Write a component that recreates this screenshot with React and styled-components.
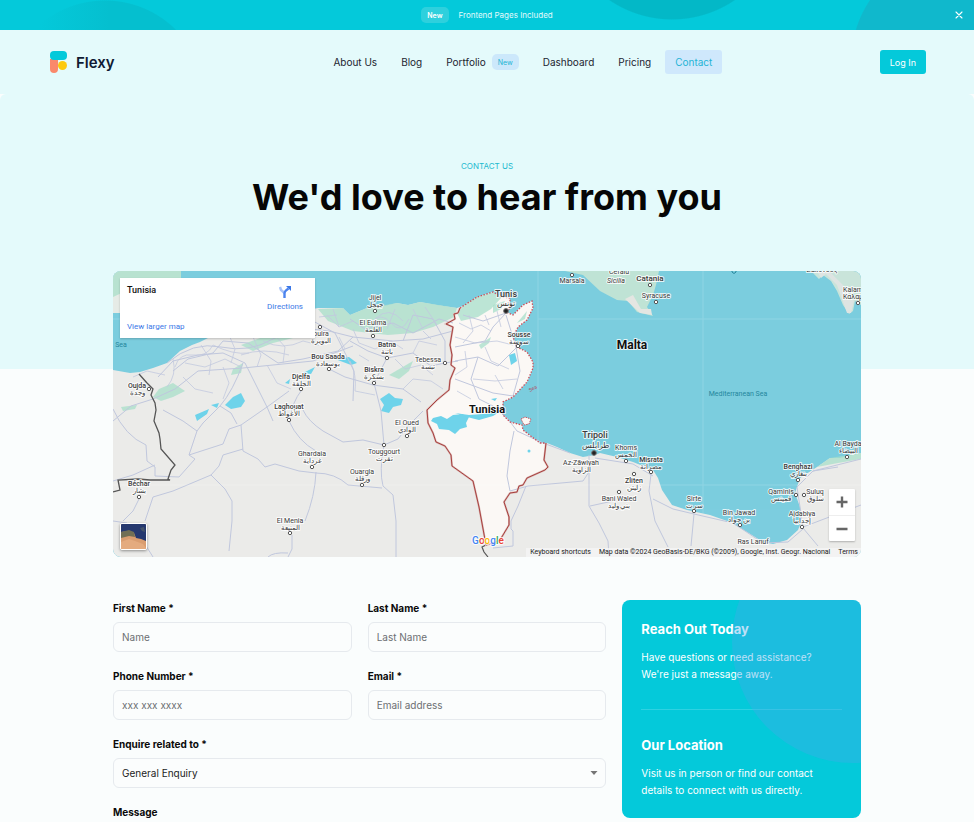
import React from "react";
import styled, { createGlobalStyle, css } from "styled-components";

const GlobalStyle = createGlobalStyle`
  *, *::before, *::after { box-sizing: border-box; }
  body {
    margin: 0;
    background: #fafdfd;
    color: #0a0a0a;
    font-family: Inter, "Liberation Sans", sans-serif;
    font-size: 10px;
  }
  h1, h2, p { margin: 0; }
  button, input, select, textarea { font-family: inherit; }
`;

/* ---------- announcement ---------- */

const Banner = styled.aside`
  display: grid;
  grid-template-columns: 24px 1fr 24px;
  align-items: center;
  height: 30px;
  padding: 0 3px;
  color: #e2fafc;
  background:
    radial-gradient(circle 112px at 69% -92px, #03b8c7 99%, transparent 100%),
    radial-gradient(circle 107px at calc(100% - 16px) 60px, #10b8cc 99%, transparent 100%),
    linear-gradient(90deg, #04c9da 40px, transparent 110px),
    radial-gradient(circle 101px at 105px 101px, #05bfcf 99%, transparent 100%),
    #04c9da;
`;

const BannerText = styled.p`
  grid-column: 2;
  display: flex;
  align-items: center;
  justify-content: center;
  gap: 10px;
  font-size: 8px;
`;

const Badge = styled.span`
  display: inline-flex;
  align-items: center;
  height: 16px;
  padding: 0 6px;
  border-radius: 5px;
  font-size: 7px;
  ${(p) =>
    p.$solid
      ? css`background: #2ed0dd; color: #fff; font-weight: 600;`
      : css`background: #cce8fb; color: #23b5d3;`}
`;

const CloseButton = styled.button`
  display: grid;
  place-items: center;
  width: 24px;
  height: 24px;
  padding: 0;
  border: 0;
  background: none;
  color: #fff;
`;

/* ---------- header ---------- */

const Header = styled.header`
  display: flex;
  align-items: center;
  justify-content: space-between;
  height: 64px;
  padding: 0 48px 0 50px;
  background: #e4fafb;
`;

const Brand = styled.a`
  display: flex;
  align-items: center;
  gap: 9px;
  min-width: 116px;
  color: #0f1a33;
  font-size: 15px;
  font-weight: 600;
  text-decoration: none;
`;

const Nav = styled.nav`
  display: flex;
  gap: 4px;
`;

const NavLink = styled.a`
  display: flex;
  align-items: center;
  gap: 6px;
  height: 24px;
  padding: 0 10px;
  border-radius: 3px;
  font-size: 10px;
  text-decoration: none;
  color: ${(p) => (p.$active ? "#1fb4d6" : "#1c2430")};
  background: ${(p) => (p.$active ? "#cfe8fc" : "transparent")};
`;

const LoginButton = styled.button`
  height: 24px;
  padding: 0 10px;
  border: 0;
  border-radius: 3px;
  background: #04c9da;
  color: #fff;
  font-size: 9px;
`;

/* ---------- hero ---------- */

const Hero = styled.section`
  height: 275px;
  padding-top: 66px;
  border-radius: 6px 6px 0 0;
  background: #e4fafb;
  text-align: center;
`;

const Eyebrow = styled.p`
  color: #22b9cf;
  font-size: 8px;
  line-height: 12px;
`;

const Title = styled.h1`
  font-size: 36px;
  font-weight: 700;
  line-height: 50px;
  color: #060606;
`;

const Container = styled.main`
  max-width: 1400px;
  margin: -98px auto 0;
  padding: 0 113px 40px;
  @media (max-width: 800px) {
    padding: 0 24px 40px;
  }
`;

/* ---------- map ---------- */

const MapFrame = styled.section`
  position: relative;
  height: 286px;
  border-radius: 8px;
  overflow: hidden;
  background: #7ccddf;
  font-family: Roboto, "Noto Sans", sans-serif;
`;

const MapSvg = styled.svg`
  display: block;
  width: 100%;
  height: 100%;
`;

const PlaceCard = styled.div`
  position: absolute;
  top: 7px;
  left: 7px;
  display: grid;
  grid-template-columns: 1fr auto;
  align-content: space-between;
  width: 195px;
  height: 60px;
  padding: 6px 12px 6px 7px;
  background: #fff;
  box-shadow: 0 1px 2px rgba(0, 0, 0, 0.2);
`;

const PlaceName = styled.h2`
  font-size: 9px;
  font-weight: 500;
  line-height: 12px;
  color: #111;
`;

const MapLink = styled.a`
  display: grid;
  justify-items: center;
  gap: 3px;
  width: max-content;
  color: #3b78e7;
  font-size: 8px;
  line-height: 10px;
  text-decoration: none;
  & > svg { margin-top: 1px; }
`;

const ZoomControls = styled.div`
  position: absolute;
  right: 6px;
  bottom: 16px;
  display: grid;
  width: 26px;
  background: #fff;
  border-radius: 1px;
  box-shadow: 0 1px 2px rgba(0, 0, 0, 0.25);
`;

const ZoomButton = styled.button`
  display: grid;
  place-items: center;
  height: 26px;
  padding: 0;
  border: 0;
  background: none;
  color: #666;
  & + & { border-top: 1px solid #eee; }
`;

const SatelliteButton = styled.button`
  position: absolute;
  left: 7px;
  bottom: 7px;
  width: 27px;
  height: 27px;
  padding: 0;
  border: 1px solid #fff;
  border-radius: 2px;
  overflow: hidden;
  box-shadow: 0 1px 3px rgba(0, 0, 0, 0.4);
`;

const Attribution = styled.p`
  position: absolute;
  right: 0;
  bottom: 0;
  display: flex;
  gap: 8px;
  padding: 0 3px 0 4px;
  background: rgba(245, 245, 245, 0.75);
  color: #222;
  font-size: 7px;
  line-height: 9px;
  white-space: nowrap;
`;

const PLACES = [
  { x: 262, y: 29, name: "Jijel", ar: "جيجل", dot: [262, 40] },
  { x: 260, y: 54, name: "El Eulma", ar: "العلمة", dot: [260, 65] },
  { x: 208, y: 65, name: "ouira", ar: "البويرة", dot: [207, 56] },
  { x: 215, y: 88, name: "Bou Saada", ar: "بوسعادة", dot: [216, 98], w: 500 },
  { x: 188, y: 108, name: "Djelfa", ar: "الجلفة", dot: [188, 118], w: 500 },
  { x: 274, y: 76, name: "Batna", ar: "باتنة", dot: [274, 87], w: 500 },
  { x: 261, y: 101, name: "Biskra", ar: "بسكرة", dot: [261, 112], w: 500 },
  { x: 315, y: 91, name: "Tebessa", ar: "تبسة", dot: [332, 92] },
  { x: 24, y: 117, name: "Oujda", ar: "وجدة", dot: [36, 118], w: 500 },
  { x: 176, y: 138, name: "Laghouat", ar: "الأغواط", dot: [176, 149], w: 500 },
  { x: 294, y: 154, name: "El Oued", ar: "الوادي", dot: [294, 165] },
  { x: 271, y: 183, name: "Touggourt", ar: "تقرت", dot: [271, 174] },
  { x: 199, y: 185, name: "Ghardaia", ar: "غرداية", dot: [199, 196] },
  { x: 249, y: 203, name: "Ouargla", ar: "ورقلة", dot: [249, 214] },
  { x: 26, y: 215, name: "Béchar", ar: "بشار", dot: [26, 226], w: 500 },
  { x: 177, y: 252, name: "El Menia", ar: "المنيعة", dot: [177, 262] },
  { x: 406, y: 66, name: "Sousse", ar: "سوسة", dot: [405, 75], w: 500 },
  { x: 459, y: 12, name: "Marsala", dot: [459, 4] },
  { x: 506, y: 3, name: "Cefalù" },
  { x: 503, y: 12, name: "Sicilia", italic: true },
  { x: 537, y: 10, name: "Catania", dot: [537, 14], size: 8, w: 500 },
  { x: 543, y: 27, name: "Syracuse", dot: [543, 31] },
  { x: 709, y: 1, name: "Ζάκυνθος" },
  { x: 740, y: 21, name: "Kalam" },
  { x: 740, y: 28, name: "Καλαμ", dot: [745, 32] },
  { x: 468, y: 194, name: "Az-Zāwiyah", ar: "الزاوية" },
  { x: 513, y: 179, name: "Khoms", ar: "الخمس", dot: [513, 190] },
  { x: 538, y: 191, name: "Misrata", ar: "مصراتة", dot: [538, 201], w: 500 },
  { x: 521, y: 212, name: "Zliten", ar: "زليتن", dot: [521, 203], w: 500 },
  { x: 506, y: 230, name: "Bani Waled", ar: "بني وليد", dot: [506, 221] },
  { x: 581, y: 230, name: "Sirte", ar: "سرت", dot: [581, 240] },
  { x: 626, y: 244, name: "Bin Jawad", ar: "بن جواد", dot: [627, 254] },
  { x: 640, y: 273, name: "Ras Lanuf" },
  { x: 685, y: 198, name: "Benghazi", ar: "بنغازي", dot: [685, 209], w: 500 },
  { x: 668, y: 223, name: "Qaminis", ar: "قمينس", dot: [683, 224] },
  { x: 702, y: 223, name: "Suluq", ar: "سلوق", dot: [691, 224] },
  { x: 689, y: 245, name: "Ajdabiya", ar: "إجدابيا", dot: [689, 256] },
  { x: 735, y: 175, name: "Al Bayda", ar: "البيضاء", dot: [734, 186] },
];

const ROADS = [
  "M0 150L18 135L40 128L62 118L85 100L130 97L200 90L240 75",
  "M45 106L60 90L85 84L110 82L132 92L140 108L154 136L160 150",
  "M54 92Q80 70 108 76T160 68T216 60",
  "M60 100L75 88L100 82L110 70L135 72L165 92L190 88L225 80L240 66",
  "M0 138Q12 165 33 174L34 190L42 196V205",
  "M0 210L20 204L42 194M42 205L66 206L82 188L76 184L110 173L116 158L128 154L154 136L176 120",
  "M130 92Q120 120 107 135L118 142L124 153M107 135L90 152L84 160L76 184M50 139L70 150L84 160",
  "M128 154L130 180L145 188L152 196L162 193L186 200L203 202Q222 202 235 214",
  "M130 178L110 184L106 195L98 204L60 220L40 226L32 250M98 204L112 218L119 230V250L116 280",
  "M26 228L20 240L10 250M0 250L14 252L30 270L40 286",
  "M176 150Q185 170 203 180M203 201Q202 225 192 250M179 264V278L175 286M155 286Q160 281 175 282",
  "M190 139Q195 150 210 160L230 171L250 169L271 174L285 168L296 154L310 140",
  "M271 174Q266 200 270 215L280 224L283 250V286M235 214L269 217",
  "M188 120Q180 130 176 149M216 98L232 106L260 114L290 118L308 131",
  "M216 60L240 66L280 70L310 68L340 60M237 48L252 58L280 52L300 62L326 48L340 52",
  "M237 70L255 80L274 87L300 82L318 95L332 92L345 90M274 87L261 112L268 140L271 174",
  "M200 50L222 62L232 82L241 100L240 130M290 70L300 44L320 48L332 70L332 92",
  "M350 44L370 50L393 42M393 42L380 56L372 70L342 76M393 44L398 60L403 76L407 100L400 125L380 122L342 108",
  "M342 90L365 86L385 95L404 76M365 86L358 108L366 128L380 135",
  "M380 135L395 148L404 160L430 172L457 182M401 160L397 180L394 205L397 220L415 215L470 210L478 198",
  "M413 215L405 235L398 250V258L400 260V275L380 277",
  "M482 187L520 193L540 205M476 184V235L486 252L495 270L496 286",
  "M477 235L500 230M538 203L536 220L542 250L555 276M540 228L560 238L581 243L578 275",
  "M581 243L620 252L650 272L675 271L690 258L687 236L684 216L700 200L748 188",
  "M690 257L705 275M690 256L748 234M700 200L725 196",
];

const MINOR_ROADS = [
  "M258 52q10-12 20 0t18-4M262 48q14-14 28 2M300 38l10 20M312 36l12 18M282 38l-8 20M214 44l12 12l14-6M206 46l18-2M220 38l6 18",
  "M62 96Q66 82 80 84T100 74Q120 84 136 82M72 92L92 96L112 88L128 96M88 74L98 90L96 104M116 64L122 78L118 92M140 66L148 84L144 96M160 62L172 76L170 92M60 88Q64 104 54 116M20 106L34 100L52 104",
  "M150 70Q170 80 190 70L206 74M128 84Q150 76 176 84M154 94L164 112L178 118M110 96L116 112L110 128M70 106L82 118L100 122",
  "M240 58L246 72L262 78L278 70L290 78M246 84L256 90M282 88L292 98L308 94L320 104M300 82L306 70L324 74M310 60L318 68",
  "M237 90Q244 104 242 120L262 124M290 118L300 108L318 110L330 118M226 66L232 78",
  "M346 52L358 58L368 54L378 60M356 44L360 60L350 72M372 44L376 54M384 40L388 56M342 66L362 72L384 70L400 74M352 80L354 96L342 104M372 76L378 90L396 98",
  "M382 104L390 118M360 108L382 110L404 108M344 120L358 128",
];

const GREENS = [
  "M0 0H68V8L50 14L30 12L0 26Z",
  "M205 38L230 37L237 44L254 37L284 32L295 34L307 31L344 37L341 46L320 56L300 62L275 64L240 60L215 50Z",
  "M128 74L150 66L178 62L196 58L184 66L160 72L140 80Z",
  "M350 35L364 26L380 21L389 26L378 38L365 46L348 50L344 42Z",
  "M120 98L130 92L128 102L118 104Z",
  "M46 118L60 112L72 120L60 126L48 130L40 126Z",
  "M366 74L378 66L376 72L368 78Z",
  "M276 104L300 90L296 100L286 108Z",
  "M380 34L392 30L388 38L380 42Z",
  "M404 52L414 40L412 48Z",
  "M8 136L24 134L22 138L10 140Z",
  "M704 196L717 187L748 182V188L725 192Z",
];

const LAKES = [
  "M112 134L120 126L128 122L132 130L128 136L118 138Z",
  "M82 144L96 138L94 143L84 150Z M98 134L106 132L104 137Z",
  "M172 112L177 108L176 113Z M190 102L202 96L198 103Z",
  "M222 88L236 86L244 92L238 94Z",
  "M267 128L276 122L282 127L290 128L288 134L280 136L276 142L268 140L271 134Z",
  "M396 84L402 82L404 90L398 94Z M378 128L384 127L382 130Z",
  "M320 147L328 145L334 148L340 144L350 143L356 146L353 152L354 156L347 158L342 163L336 159L326 158L324 153L318 150Z M342 142L356 144L370 143L388 140L380 145L366 149L358 147Z",
];

const AFRICA =
  "M0 99L17 102L27 101L40 97L54 92L67 80L79 74L87 71L95 67L110 62L150 48L190 40L205 37L230 37L237 44L254 37L267 36L284 32L295 34L307 31L324 34L344 37L350 35L364 26L380 21L389 26L397 27L397 37L393 41L400 44L410 34L419 30L420 37L414 49L405 56L400 66L404 76L414 81L420 91L420 97L414 111L400 126L390 131L390 144L397 151L409 154L410 159L419 166L427 172L434 172L444 176L457 182L470 186L482 184L487 182L504 186L520 191L540 199L545 207L549 219L559 234L574 239L597 244L617 251L634 261L650 271L660 273L674 269L685 259L689 249L687 236L682 222L687 207L704 196L717 187L727 187L748 182V286H0Z";
const TUNISIA_COAST =
  "M347 37L364 26L380 21L389 26L397 27L397 37L393 41L400 44L410 34L419 30L420 37L414 49L405 56L400 66L404 76L414 81L420 91L420 97L414 111L400 126L390 131V144L397 151L409 154L410 159L419 166L427 172H433";
const TUNISIA_BORDER =
  "L431 189L435 196L432 199L414 207L410 214L406 215L404 221L397 222L391 231L396 246V254L387 269L380 272L373 274L366 236L360 210L339 195L338 184L332 175L323 171L320 162L315 152L314 139L324 129L336 119L337 109L342 97L338 94L339 84L337 74L340 56L333 53L342 48L341 43L345 42L347 37";

const Label = styled.text`
  font-size: ${(p) => p.$size || 7}px;
  font-weight: ${(p) => p.$weight || 400};
  font-style: ${(p) => (p.$italic ? "italic" : "normal")};
  fill: ${(p) => p.$color || "#3a3a3a"};
  stroke: ${(p) => (p.$plain ? "none" : "rgba(255,255,255,0.8)")};
  stroke-width: 2px;
  stroke-linejoin: round;
  paint-order: stroke;
  text-anchor: middle;
`;

function Place({ x, y, name, ar, dot, size, w, italic }) {
  return (
    <g>
      <Label x={x} y={y} $size={size} $weight={w} $italic={italic}>{name}</Label>
      {ar && <Label x={x} y={y + 7}>{ar}</Label>}
      {dot && <circle cx={dot[0]} cy={dot[1]} r="1.7" fill="#fff" stroke="#555" />}
    </g>
  );
}

function MapDrawing() {
  return (
    <MapSvg viewBox="0 0 748 286" preserveAspectRatio="xMidYMid slice" role="img" aria-label="Map of Tunisia">
      <rect width="748" height="286" fill="#7ccddf" />
      <path d={AFRICA} fill="#ebebe9" />
      <path d="M0 0H68V8L50 14L36 34L20 42L0 42Z" fill="#e6ebe6" />
      <path d="M452 0L470 4L487 20L504 29L515 30L524 41L540 45L534 36L540 24L543 14L546 0Z" fill="#bfe3d5" />
      <path d="M512 28L520 24L528 38L538 38L539 44L527 42Z" fill="#e4e6e2" />
      <path d="M694 0L700 2L706 8L710 4L718 10L724 20L730 34L736 43L740 40L742 30L748 34V0Z" fill="#c9e4da" />
      <path d="M704 0L708 7L713 3L724 14L734 42L738 42L741 30L730 14L716 0Z" fill="#dfe4e2" />
      <path d={TUNISIA_COAST + TUNISIA_BORDER + "Z"} fill="#fbf8f5" />
      <path d="M408 148L412 146L418 148L416 153L411 154Z" fill="#fbf8f5" stroke="#c8505c" strokeDasharray="1.5 1" />
      {GREENS.map((d) => <path key={d} d={d} fill="#a8dfc9" opacity=".75" />)}
      {LAKES.map((d) => <path key={d} d={d} fill="#6fd3ea" />)}
      <circle cx="416" cy="180" r="1.5" fill="#6fd3ea" />
      {ROADS.map((d) => <path key={d} d={d} fill="none" stroke="#c0c7dd" strokeWidth="1" strokeLinejoin="round" />)}
      {MINOR_ROADS.map((d) => <path key={d} d={d} fill="none" stroke="#c3c9de" strokeWidth=".8" strokeLinejoin="round" />)}
      <path d="M425 0V172M590 0V242M0 48H50M425 48H748M0 214H748" stroke="#fff" opacity=".15" />
      <path d="M26 103L34 112L40 118L38 124L42 132L43 139L41 150L46 162L47 168L48 178L62 194L58 199L55 208L57 209L37 209L25 208L5 209L7 219L0 221" fill="none" stroke="#555" strokeWidth="1.3" />
      <path d="M373 274L369 276L371 281L375 286" fill="none" stroke="#555" strokeWidth="1.2" />
      <path d={"M433 172" + TUNISIA_BORDER} fill="none" stroke="#d9b8b4" strokeWidth="2" />
      <path d={"M433 172" + TUNISIA_BORDER} fill="none" stroke="#a8403f" strokeWidth="1" />
      <path d={TUNISIA_COAST} fill="none" stroke="#c8505c" strokeWidth="1.3" strokeDasharray="1.5 1.5" />
      {PLACES.map((p) => <Place key={p.name} {...p} />)}
      <Label x={393} y={26} $size={9} $weight={500}>Tunis</Label>
      <Label x={393} y={35} $size={8}>تونس</Label>
      <circle cx="393" cy="40" r="2.4" fill="#222" stroke="#777" />
      <Label x={482} y={167} $size={9} $weight={500}>Tripoli</Label>
      <Label x={482} y={177} $size={8}>طرابلس</Label>
      <circle cx="481" cy="182" r="2.4" fill="#222" stroke="#777" />
      <Label x={374} y={142} $size={11} $weight={700} $color="#111">Tunisia</Label>
      <Label x={519} y={78} $size={12} $weight={700} $color="#111">Malta</Label>
      <Label x={625} y={125} $color="#25879d" $plain>Mediterranean Sea</Label>
      <Label x={8} y={76} $color="#25879d" $plain>Sea</Label>
      <text x="417" y="121" transform="rotate(-28 417 121)" fontSize="5" fill="#b34b5d">Sea</text>
      <path d="M619 0v1q2 3 4 0v-1" fill="none" stroke="#25879d" />
      <Label x={375} y={273} $size={10} $weight={500}>
        <tspan fill="#4285f4">G</tspan><tspan fill="#ea4335">o</tspan><tspan fill="#fbbc05">o</tspan><tspan fill="#4285f4">g</tspan><tspan fill="#34a853">l</tspan><tspan fill="#ea4335">e</tspan>
      </Label>
    </MapSvg>
  );
}

function ContactMap() {
  return (
    <MapFrame aria-label="Our location on the map">
      <MapDrawing />
      <PlaceCard>
        <PlaceName>Tunisia</PlaceName>
        <MapLink href="#directions">
          <svg width="14" height="14" viewBox="0 0 14 14" fill="none">
            <path d="M2 2L3 5L6.5 8" stroke="#a8c3f8" strokeWidth="2.4" />
            <path d="M6.5 13V8.5Q6.5 6 10.5 3.5" stroke="#4c84ee" strokeWidth="2.4" />
            <path d="M8 1H13V6Z" fill="#3b78e7" />
          </svg>
          Directions
        </MapLink>
        <MapLink href="#larger-map">View larger map</MapLink>
      </PlaceCard>
      <SatelliteButton aria-label="Show satellite imagery">
        <svg width="25" height="25" viewBox="0 0 25 25">
          <rect width="25" height="25" fill="#d99d70" />
          <path d="M0 0H25V17L20 15L15 14L13 9L8 7L0 8Z" fill="#25386f" />
          <path d="M0 8L8 6L13 8L14 13L8 12L0 14Z" fill="#716f55" />
          <path d="M19 4L23 3L24 8L21 7Z" fill="#45546b" />
          <path d="M0 18L8 15L14 17L22 20L25 24V25H0Z" fill="#e4ab7f" />
        </svg>
      </SatelliteButton>
      <ZoomControls>
        <ZoomButton aria-label="Zoom in">
          <svg width="12" height="12" viewBox="0 0 12 12"><path d="M0.5 6H11.5M6 0.5V11.5" stroke="currentColor" strokeWidth="2.4" /></svg>
        </ZoomButton>
        <ZoomButton aria-label="Zoom out">
          <svg width="12" height="12" viewBox="0 0 12 12"><path d="M0.5 6H11.5" stroke="currentColor" strokeWidth="2.4" /></svg>
        </ZoomButton>
      </ZoomControls>
      <Attribution>
        <span>Keyboard shortcuts</span>
        <span>Map data ©2024 GeoBasis-DE/BKG (©2009), Google, Inst. Geogr. Nacional</span>
        <span>Terms</span>
      </Attribution>
    </MapFrame>
  );
}

/* ---------- form ---------- */

const ContactGrid = styled.div`
  display: grid;
  grid-template-columns: repeat(3, minmax(0, 1fr));
  gap: 16px;
  align-items: start;
  margin-top: 43px;
`;

const Form = styled.form`
  grid-column: span 2;
  display: grid;
  grid-template-columns: repeat(2, minmax(0, 1fr));
  gap: 16px;
`;

const Field = styled.div`
  display: grid;
  gap: 6px;
  grid-column: ${(p) => (p.$wide ? "1 / -1" : "auto")};
`;

const FieldLabel = styled.label`
  font-size: 10px;
  font-weight: 700;
  line-height: 16px;
`;

const control = css`
  width: 100%;
  border: 1px solid #e6eaee;
  border-radius: 6px;
  background: #fbfdfd;
  color: #1c1c1c;
  font-size: 10px;
`;

const Input = styled.input`
  ${control}
  height: 30px;
  padding: 0 8px;
  &::placeholder { color: #6c6f72; opacity: 1; }
`;

const SelectWrap = styled.div`
  display: grid;
  align-items: center;
  & > * { grid-area: 1 / 1; }
  & > svg { justify-self: end; margin-right: 8px; pointer-events: none; }
`;

const Select = styled.select`
  ${control}
  height: 30px;
  padding: 0 8px;
  appearance: none;
`;

const TextArea = styled.textarea`
  ${control}
  height: 90px;
  padding: 8px;
`;

const InfoCard = styled.aside`
  position: relative;
  overflow: hidden;
  padding: 19px;
  border-radius: 8px;
  background: #04c9da;
  color: #fff;
  &::after {
    content: "";
    position: absolute;
    top: -79px;
    right: -113px;
    width: 242px;
    height: 242px;
    border-radius: 50%;
    background: rgba(71, 170, 232, 0.36);
    pointer-events: none;
  }
`;

const InfoBlock = styled.section`
  & + & {
    margin-top: 26px;
    padding-top: 25px;
    border-top: 1px solid #2fd1e1;
  }
`;

const InfoTitle = styled.h2`
  font-size: 13px;
  font-weight: 700;
  line-height: 20px;
`;

const InfoText = styled.p`
  margin-top: 10px;
  font-size: 10px;
  line-height: 17px;
`;

const NAV = [
  { label: "About Us" },
  { label: "Blog" },
  { label: "Portfolio", badge: "New" },
  { label: "Dashboard" },
  { label: "Pricing" },
  { label: "Contact", active: true },
];

const FIELDS = [
  { id: "first-name", label: "First Name *", placeholder: "Name", type: "text" },
  { id: "last-name", label: "Last Name *", placeholder: "Last Name", type: "text" },
  { id: "phone", label: "Phone Number *", placeholder: "xxx xxx xxxx", type: "tel" },
  { id: "email", label: "Email *", placeholder: "Email address", type: "email" },
];

export default function App() {
  return (
    <>
      <GlobalStyle />
      <Banner>
        <BannerText><Badge $solid>New</Badge>Frontend Pages Included</BannerText>
        <CloseButton aria-label="Close">
          <svg width="8" height="8" viewBox="0 0 8 8"><path d="M1 1L7 7M7 1L1 7" stroke="currentColor" strokeWidth="1.1" strokeLinecap="round" /></svg>
        </CloseButton>
      </Banner>
      <Header>
        <Brand href="#home">
          <svg width="17" height="22" viewBox="0 0 17 22">
            <path d="M0 8H8V18a4 4 0 0 1-8 0Z" fill="#fa896b" />
            <rect width="17" height="9" rx="4" fill="#04c9da" />
            <circle cx="12.5" cy="14.5" r="4.5" fill="#fdc90f" />
          </svg>
          Flexy
        </Brand>
        <Nav>
          {NAV.map((n) => (
            <NavLink key={n.label} href="#" $active={n.active}>
              {n.label}
              {n.badge && <Badge>{n.badge}</Badge>}
            </NavLink>
          ))}
        </Nav>
        <LoginButton>Log In</LoginButton>
      </Header>
      <Hero>
        <Eyebrow>CONTACT US</Eyebrow>
        <Title>We'd love to hear from you</Title>
      </Hero>
      <Container>
        <ContactMap />
        <ContactGrid>
          <Form>
            {FIELDS.map((f) => (
              <Field key={f.id}>
                <FieldLabel htmlFor={f.id}>{f.label}</FieldLabel>
                <Input id={f.id} type={f.type} placeholder={f.placeholder} />
              </Field>
            ))}
            <Field $wide>
              <FieldLabel htmlFor="enquiry">Enquire related to *</FieldLabel>
              <SelectWrap>
                <Select id="enquiry"><option>General Enquiry</option></Select>
                <svg width="8" height="4" viewBox="0 0 8 4"><path d="M0.5 0H7.5L4 4Z" fill="#757575" /></svg>
              </SelectWrap>
            </Field>
            <Field $wide>
              <FieldLabel htmlFor="message">Message</FieldLabel>
              <TextArea id="message" />
            </Field>
          </Form>
          <InfoCard>
            <InfoBlock>
              <InfoTitle>Reach Out Today</InfoTitle>
              <InfoText>Have questions or need assistance?<br />We're just a message away.</InfoText>
            </InfoBlock>
            <InfoBlock>
              <InfoTitle>Our Location</InfoTitle>
              <InfoText>Visit us in person or find our contact details to connect with us directly.</InfoText>
            </InfoBlock>
          </InfoCard>
        </ContactGrid>
      </Container>
    </>
  );
}
